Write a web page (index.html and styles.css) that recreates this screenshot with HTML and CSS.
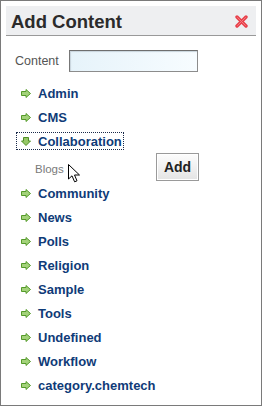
FILE: index.html
```html
<!DOCTYPE html>
<html lang="en">
<head>
    <meta charset="UTF-8">
    <title>Add Content</title>
    <link rel="stylesheet" href="styles.css">
</head>
<body>
<div class="dialog">
    <div class="dialog-head">
        <h2 class="dialog-title">Add Content</h2>
        <a class="close" href="#" title="Close">
            <svg width="13" height="13" viewBox="0 0 13 13">
                <path d="M2 2 L11 11 M11 2 L2 11" stroke="#e8414b" stroke-width="3.4" stroke-linecap="round"/>
                <path d="M2.5 2.5 L10.5 10.5 M10.5 2.5 L2.5 10.5" stroke="#f47a80" stroke-width="1" stroke-linecap="round"/>
            </svg>
        </a>
    </div>
    <div class="search-row">
        <label for="contentInput">Content</label>
        <input type="text" id="contentInput">
    </div>
    <ul class="tree">
        <li><a href="#"><i class="arr"></i>Admin</a></li>
        <li><a href="#"><i class="arr"></i>CMS</a></li>
        <li class="open">
            <a href="#" class="focus"><i class="arr down"></i>Collaboration</a>
            <div class="child">
                <span>Blogs</span>
                <button class="add-btn">Add</button>
                <svg class="cursor" width="13" height="19" viewBox="0 0 13 19">
                    <path d="M0.5 0.5 L0.5 15 L4 11.8 L6.6 17.8 L9 16.8 L6.5 11 L11.5 11 Z" fill="#fff" stroke="#000" stroke-width="1"/>
                </svg>
            </div>
        </li>
        <li><a href="#"><i class="arr"></i>Community</a></li>
        <li><a href="#"><i class="arr"></i>News</a></li>
        <li><a href="#"><i class="arr"></i>Polls</a></li>
        <li><a href="#"><i class="arr"></i>Religion</a></li>
        <li><a href="#"><i class="arr"></i>Sample</a></li>
        <li><a href="#"><i class="arr"></i>Tools</a></li>
        <li><a href="#"><i class="arr"></i>Undefined</a></li>
        <li><a href="#"><i class="arr"></i>Workflow</a></li>
        <li><a href="#"><i class="arr"></i>category.chemtech</a></li>
    </ul>
</div>
</body>
</html>
```

FILE: styles.css
```css
/*reset*/
body,h1,h2,h3,ul,li,button,input{
    padding: 0;
    margin: 0;
}
body{
    font-family: "Liberation Sans", Arial, sans-serif;
    background: #fff;
}
ul{
    list-style: none;
}
a{
    text-decoration: none;
}
.dialog{
    width: 250px;
    height: 394px;
    border: 1px solid #7a7a7a;
    padding: 5px;
}
.dialog-head{
    height: 29px;
    background: #eeeff1;
    border-bottom: 1px solid #999;
    display: flex;
    align-items: center;
    justify-content: space-between;
    padding: 0 8px 0 5px;
}
.dialog-title{
    font-size: 18.5px;
    font-weight: bold;
    color: #2b2b2b;
    margin-top: 2px;
}
.close{
    display: flex;
    margin-top: 1px;
}
.search-row{
    display: flex;
    align-items: center;
    margin-top: 14px;
    padding-left: 9px;
}
.search-row label{
    font-size: 12.5px;
    color: #555;
    width: 54px;
}
.search-row input{
    width: 127px;
    height: 20px;
    border: 1px solid #8c8c8c;
    border-top-color: #6e6e6e;
    border-left-color: #777;
    background: linear-gradient(to right, #e6f3fa, #f7fcff);
    box-shadow: inset 1px 1px 1px #c8d4dc;
}
.tree{
    margin-top: 9px;
}
.tree li{
    padding-left: 10px;
}
.tree li>a{
    display: inline-flex;
    align-items: center;
    height: 24px;
    padding: 0 1px 0 4px;
    border: 1px solid transparent;
    box-sizing: border-box;
    font-size: 13px;
    font-weight: bold;
    color: #0f3b78;
}
.tree li>a.focus{
    height: 18px;
    margin: 3px 0;
    border: 1px dotted #1a2a4a;
}
.arr{
    display: inline-block;
    width: 10px;
    height: 9px;
    margin-right: 7px;
    background: url("data:image/svg+xml;utf8,<svg xmlns='http://www.w3.org/2000/svg' width='10' height='9' viewBox='0 0 10 9'><path d='M0.5 2.5 H5 V0.5 L9.5 4.5 L5 8.5 V6.5 H0.5 Z' fill='%23a3d27a' stroke='%23559a2a' stroke-width='1'/></svg>") no-repeat;
}
.arr.down{
    background: url("data:image/svg+xml;utf8,<svg xmlns='http://www.w3.org/2000/svg' width='10' height='9' viewBox='0 0 10 9'><path d='M2.5 0.5 V4 H0.5 L5 8.5 L9.5 4 H7.5 V0.5 Z' fill='%2396c766' stroke='%234f8f24' stroke-width='1'/></svg>") no-repeat;
}
.child{
    position: relative;
    display: flex;
    align-items: center;
    height: 28px;
    padding-left: 19px;
}
.child span{
    font-size: 11.5px;
    color: #7a7a7a;
    width: 121px;
    margin-top: 3px;
}
.add-btn{
    width: 43px;
    height: 28px;
    font-family: "Liberation Sans", Arial, sans-serif;
    font-size: 14px;
    font-weight: bold;
    color: #222;
    border: 1px solid #9a9a9a;
    background: linear-gradient(to bottom, #fdfdfd, #e4e4e4);
    box-shadow: inset 0 0 0 1px #fff;
}
.cursor{
    position: absolute;
    left: 52px;
    top: 11px;
}
```
